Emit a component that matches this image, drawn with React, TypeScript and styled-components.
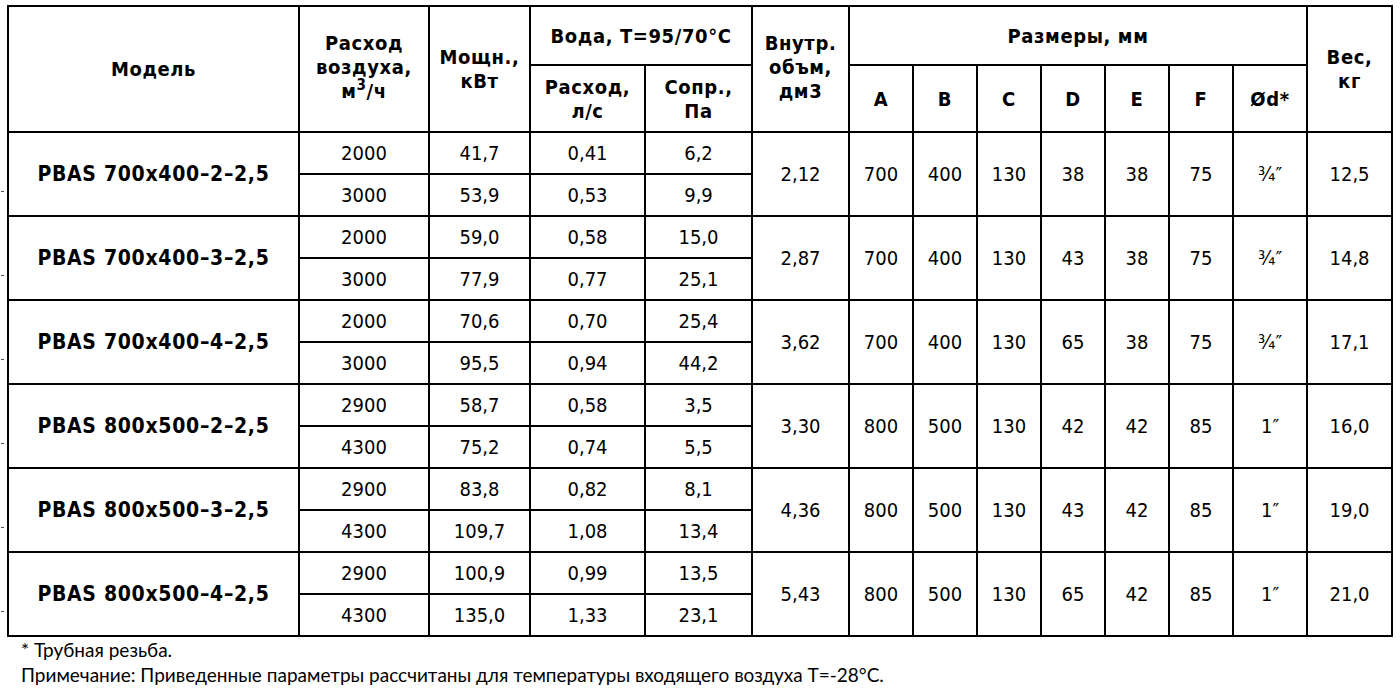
import React from 'react';
import styled, { createGlobalStyle } from 'styled-components';

const Global = createGlobalStyle`
  html, body {
    margin: 0;
    background: #fff;
    color: #000;
  }
`;

const Page = styled.div`
  padding: 5px 0 0 7px;
  width: 1393px;
`;

const Table = styled.table`
  border-collapse: collapse;
  table-layout: fixed;
  width: 1384px;
  font-family: "DejaVu Sans", sans-serif;
  font-stretch: condensed;
`;

const Row = styled.tr<{ $h: number }>`
  height: ${p => p.$h}px;
`;

const Head = styled.th<{ $lift?: boolean }>`
  border: 2px solid #000;
  padding: 0 0 ${p => (p.$lift ? 5 : 0)}px;
  font-size: 20px;
  font-weight: 800;
  letter-spacing: 0.6px;
  line-height: 24px;
  text-align: center;
  vertical-align: middle;
`;

const Cell = styled.td`
  border: 2px solid #000;
  padding: 0;
  font-size: 20px;
  text-align: center;
  vertical-align: middle;
`;

const ModelCell = styled(Cell)`
  position: relative;
  font-size: 21px;
  font-weight: 800;
  letter-spacing: 0.7px;
  white-space: nowrap;

  &::before {
    content: '';
    position: absolute;
    left: -8px;
    top: 58px;
    width: 3px;
    height: 1px;
    background: #555;
  }
`;

const Sup = styled.sup`
  font-size: 0.75em;
  line-height: 0;
`;

const Notes = styled.div`
  padding-left: 14px;
  font-family: Lato, "Noto Sans", sans-serif;
  font-size: 19px;
  line-height: 25px;
`;

const widths = [291, 130, 101, 115, 107, 97, 64, 64, 64, 64, 64, 64, 74, 85];

type Group = {
  model: string;
  rows: [string, string, string, string][];
  volume: string;
  dims: string[];
  weight: string;
};

const groups: Group[] = [
  {
    model: 'PBAS 700x400–2–2,5',
    rows: [['2000', '41,7', '0,41', '6,2'], ['3000', '53,9', '0,53', '9,9']],
    volume: '2,12',
    dims: ['700', '400', '130', '38', '38', '75', '¾″'],
    weight: '12,5',
  },
  {
    model: 'PBAS 700x400–3–2,5',
    rows: [['2000', '59,0', '0,58', '15,0'], ['3000', '77,9', '0,77', '25,1']],
    volume: '2,87',
    dims: ['700', '400', '130', '43', '38', '75', '¾″'],
    weight: '14,8',
  },
  {
    model: 'PBAS 700x400–4–2,5',
    rows: [['2000', '70,6', '0,70', '25,4'], ['3000', '95,5', '0,94', '44,2']],
    volume: '3,62',
    dims: ['700', '400', '130', '65', '38', '75', '¾″'],
    weight: '17,1',
  },
  {
    model: 'PBAS 800x500–2–2,5',
    rows: [['2900', '58,7', '0,58', '3,5'], ['4300', '75,2', '0,74', '5,5']],
    volume: '3,30',
    dims: ['800', '500', '130', '42', '42', '85', '1″'],
    weight: '16,0',
  },
  {
    model: 'PBAS 800x500–3–2,5',
    rows: [['2900', '83,8', '0,82', '8,1'], ['4300', '109,7', '1,08', '13,4']],
    volume: '4,36',
    dims: ['800', '500', '130', '43', '42', '85', '1″'],
    weight: '19,0',
  },
  {
    model: 'PBAS 800x500–4–2,5',
    rows: [['2900', '100,9', '0,99', '13,5'], ['4300', '135,0', '1,33', '23,1']],
    volume: '5,43',
    dims: ['800', '500', '130', '65', '42', '85', '1″'],
    weight: '21,0',
  },
];

export default function App() {
  return (
    <>
      <Global />
      <Page>
        <Table>
          <colgroup>
            {widths.map((w, i) => <col key={i} style={{ width: w }} />)}
          </colgroup>
          <thead>
            <Row $h={59}>
              <Head rowSpan={2}>Модель</Head>
              <Head rowSpan={2} $lift>Расход<br />воздуха,<br />м<Sup>3</Sup>/ч</Head>
              <Head rowSpan={2}>Мощн.,<br />кВт</Head>
              <Head colSpan={2}>Вода, T=95/70°C</Head>
              <Head rowSpan={2} $lift>Внутр.<br />объм,<br />дм3</Head>
              <Head colSpan={7}>Размеры, мм</Head>
              <Head rowSpan={2}>Вес,<br />кг</Head>
            </Row>
            <Row $h={67}>
              <Head>Расход,<br />л/с</Head>
              <Head>Сопр.,<br />Па</Head>
              {['A', 'B', 'C', 'D', 'E', 'F', 'Ød*'].map(l => <Head key={l}>{l}</Head>)}
            </Row>
          </thead>
          <tbody>
            {groups.map(g => (
              <React.Fragment key={g.model}>
                <Row $h={42}>
                  <ModelCell rowSpan={2}>{g.model}</ModelCell>
                  {g.rows[0].map((v, i) => <Cell key={i}>{v}</Cell>)}
                  <Cell rowSpan={2}>{g.volume}</Cell>
                  {g.dims.map((d, i) => <Cell key={i} rowSpan={2}>{d}</Cell>)}
                  <Cell rowSpan={2}>{g.weight}</Cell>
                </Row>
                <Row $h={42}>
                  {g.rows[1].map((v, i) => <Cell key={i}>{v}</Cell>)}
                </Row>
              </React.Fragment>
            ))}
          </tbody>
        </Table>
        <Notes>
          <div>* Трубная резьба.</div>
          <div>Примечание: Приведенные параметры рассчитаны для температуры входящего воздуха T=-28°C.</div>
        </Notes>
      </Page>
    </>
  );
}
